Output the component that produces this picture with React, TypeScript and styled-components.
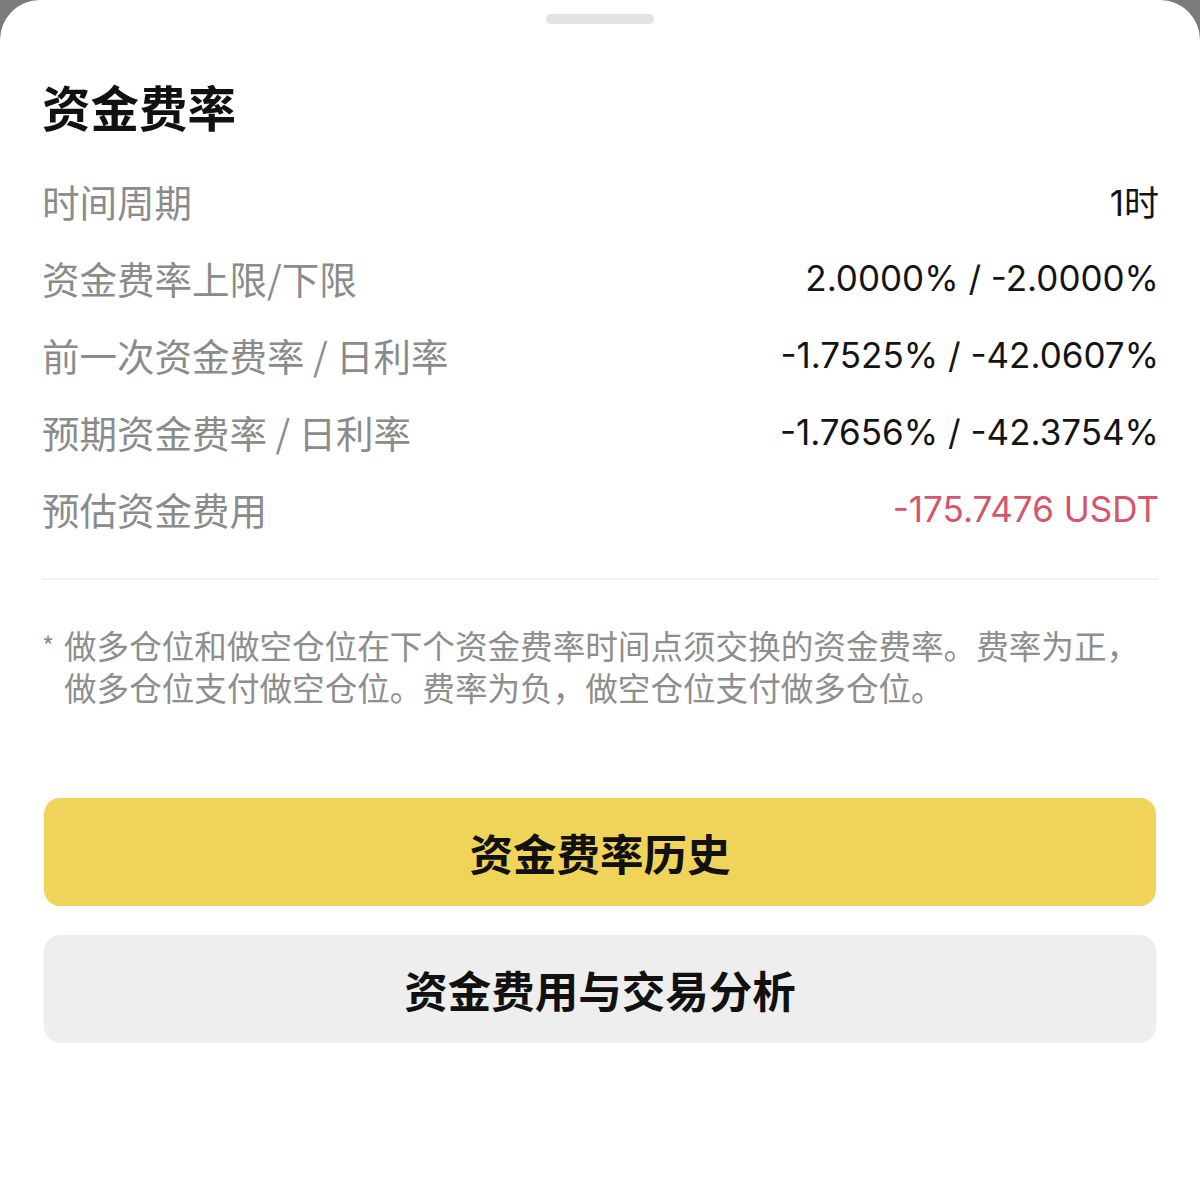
import React from 'react'
import styled, { createGlobalStyle } from 'styled-components'

const GlobalStyle = createGlobalStyle`
  html, body {
    margin: 0;
    padding: 0;
    background: #7b7b7b;
  }
  * {
    box-sizing: border-box;
  }
`

const CJK = `"Noto Sans CJK SC", "Noto Sans", sans-serif`
const NUM = `Inter, "Noto Sans CJK SC", sans-serif`

const Sheet = styled.div`
  width: 1200px;
  min-height: 1178px;
  background: #ffffff;
  border-radius: 40px 40px 0 0;
  padding: 14px 42px 0;
  display: flex;
  flex-direction: column;
  font-family: ${CJK};
`

const Handle = styled.div`
  align-self: center;
  width: 108px;
  height: 10px;
  border-radius: 5px;
  background: #e2e2e2;
`

const Title = styled.h1`
  margin: 52px 0 0;
  font-size: 48.5px;
  line-height: 60px;
  font-weight: 700;
  color: #111111;
`

const Rows = styled.div`
  margin-top: 26px;
  display: flex;
  flex-direction: column;
`

const Row = styled.div`
  height: 77px;
  display: flex;
  align-items: center;
  justify-content: space-between;
`

const Label = styled.span`
  font-size: 37.5px;
  color: #8b8b8b;
  font-family: ${CJK};
`

const Value = styled.span<{ $tone?: 'red' }>`
  font-family: ${NUM};
  font-size: 35px;
  margin-right: -1px;
  color: ${p => (p.$tone === 'red' ? '#d4556c' : '#141414')};
`

const Divider = styled.div`
  margin-top: 31px;
  height: 2px;
  background: #f1f1f1;
`

const Note = styled.div`
  margin-top: 44px;
  display: flex;
  font-size: 32.6px;
  line-height: 42px;
  color: #8e8e8e;
`

const Star = styled.span`
  flex: 0 0 22px;
  font-size: 26px;
`

const NoteText = styled.p`
  margin: 0;
  flex: 1;
`

const Buttons = styled.div`
  margin-top: 90px;
  padding: 0 2px;
  display: flex;
  flex-direction: column;
  gap: 29px;
`

const Button = styled.button<{ $variant: 'primary' | 'secondary' }>`
  height: 108px;
  border: none;
  border-radius: 16px;
  background: ${p => (p.$variant === 'primary' ? '#f0d45a' : '#eeeeee')};
  color: #111111;
  font-family: ${CJK};
  font-size: 43.5px;
  font-weight: 700;
  cursor: pointer;
`

const rows: { label: string; value: string; tone?: 'red' }[] = [
  { label: '时间周期', value: '1时' },
  { label: '资金费率上限/下限', value: '2.0000% / -2.0000%' },
  { label: '前一次资金费率 / 日利率', value: '-1.7525% / -42.0607%' },
  { label: '预期资金费率 / 日利率', value: '-1.7656% / -42.3754%' },
  { label: '预估资金费用', value: '-175.7476 USDT', tone: 'red' },
]

export default function App() {
  return (
    <>
      <GlobalStyle />
      <Sheet>
        <Handle />
        <Title>资金费率</Title>
        <Rows>
          {rows.map(r => (
            <Row key={r.label}>
              <Label>{r.label}</Label>
              <Value $tone={r.tone}>{r.value}</Value>
            </Row>
          ))}
        </Rows>
        <Divider />
        <Note>
          <Star>*</Star>
          <NoteText>
            做多仓位和做空仓位在下个资金费率时间点须交换的资金费率。费率为正，做多仓位支付做空仓位。费率为负，做空仓位支付做多仓位。
          </NoteText>
        </Note>
        <Buttons>
          <Button $variant="primary">资金费率历史</Button>
          <Button $variant="secondary">资金费用与交易分析</Button>
        </Buttons>
      </Sheet>
    </>
  )
}
